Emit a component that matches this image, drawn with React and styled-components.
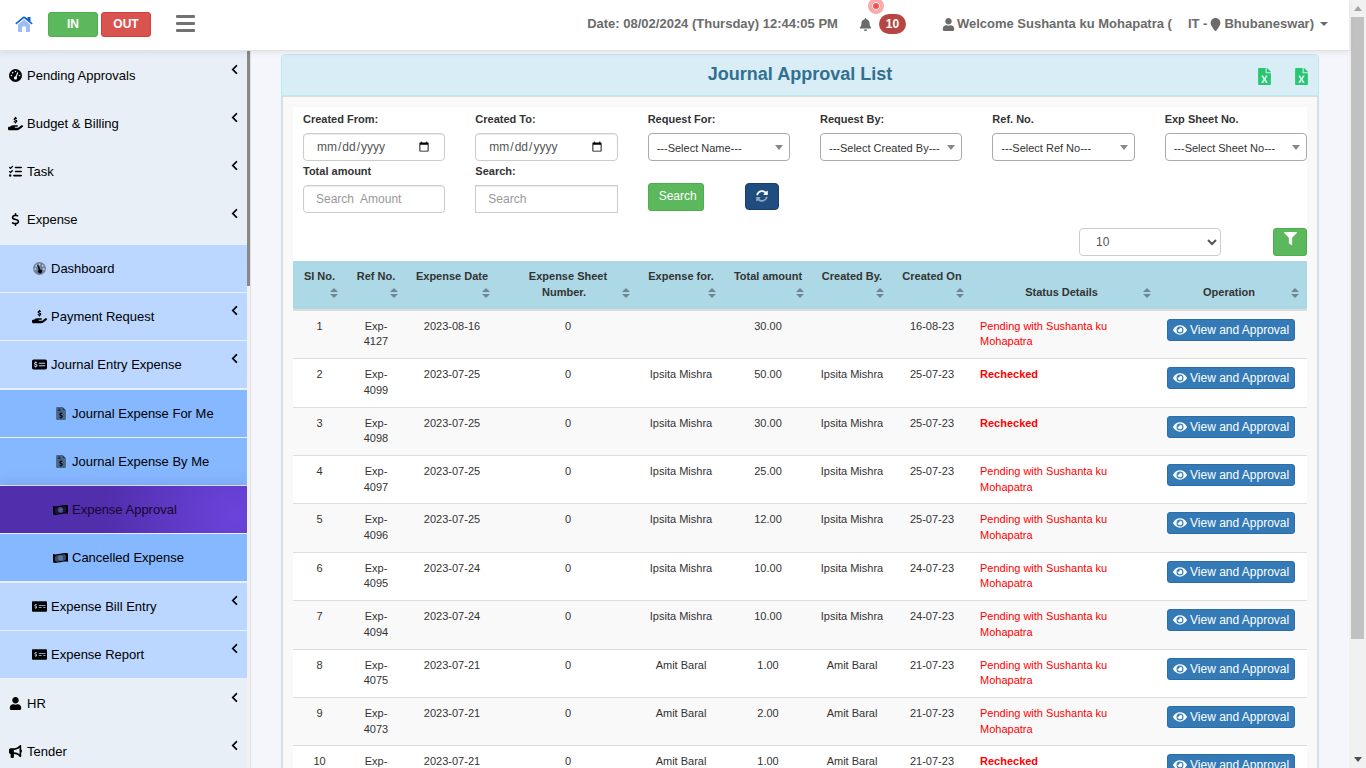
import React, { useState } from 'react'
import styled, { createGlobalStyle, css } from 'styled-components'
import {
  FaBell,
  FaChevronLeft,
  FaEye,
  FaFileExcel,
  FaFilter,
  FaMoneyCheckAlt,
  FaUser,
} from 'react-icons/fa'
import {
  FaBullhorn,
  FaDollarSign,
  FaGaugeHigh,
  FaHandHoldingDollar,
  FaListCheck,
  FaLocationPin,
  FaMoneyCheckDollar,
} from 'react-icons/fa6'

const HomeIcon = () => (
  <svg width="18" height="16" viewBox="0 0 18 16" aria-hidden="true">
    <path d="M3 8.500 9 3.400 15 8.500V15a1 1 0 0 1-1 1h-3v-4.500a1 1 0 0 0-1-1H8a1 1 0 0 0-1 1V16H4a1 1 0 0 1-1-1z" fill="#9fbcf2" />
    <path d="M12.500 1H15.500V5.400L17.700 7.300 16.700 8.500 9 2.300 1.300 8.500.3 7.300 8 .8a1.600 1.600 0 0 1 2 0l2.500 2z" fill="#1263d2" />
  </svg>
)

const GaugeDuo = () => (
  <svg width="13" height="13" viewBox="0 0 16 16" aria-hidden="true">
    <circle cx="8" cy="8" r="8" fill="#000" opacity=".4" />
    <g fill="#bbd7ff">
      <circle cx="8" cy="2.800" r="1.100" />
      <circle cx="4" cy="4.600" r="1.100" />
      <circle cx="2.700" cy="8.600" r="1.100" />
      <circle cx="12" cy="4.600" r="1.100" />
      <circle cx="13.300" cy="8.600" r="1.100" />
    </g>
    <path d="M5.300 3.900 6.500 3.400 9 9.300a2.400 2.400 0 1 1-2 .6z" fill="#000" />
  </svg>
)

const InvoiceDuo = () => (
  <svg width="10" height="13" viewBox="0 0 384 512" aria-hidden="true">
    <path d="M0 40a40 40 0 0 1 40-40h216v128h128v344a40 40 0 0 1-40 40H40a40 40 0 0 1-40-40z" fill="#000" opacity=".45" />
    <path d="M256 0v128h128zM64 64h112v32H64zm0 64h112v32H64z" fill="#000" opacity=".7" />
    <path d="M174 210h36v28c16 2 29 7 40 14l-15 34c-30-17-67-16-67 1 0 34 94 16 94 80 0 31-20 51-52 57v28h-36v-28c-19-2-36-9-48-18l17-34c33 23 77 21 77 0 0-34-94-14-94-79 0-30 19-49 48-55z" fill="#000" />
  </svg>
)

const MoneyDuo = () => (
  <svg width="15" height="12" viewBox="0 0 30 24" aria-hidden="true">
    <path
      d="M0 4c10 3 19-4 30-1v17c-11-3-20 4-30 1zM8 7 4 10v6l3 3c6 0 10-2 15-2l4-3V8l-3-3C18 5 13 7 8 7z"
      fill="#000"
      fillRule="evenodd"
    />
    <path d="M8 7 4 10v6l3 3c6 0 10-2 15-2l4-3V8l-3-3C18 5 13 7 8 7z" fill="#000" opacity=".6" />
    <ellipse cx="15" cy="12" rx="5" ry="5.500" fill="#7fa8e0" opacity=".45" />
  </svg>
)

const RefreshDuo = () => (
  <svg width="12" height="12" viewBox="0 0 512 512" aria-hidden="true">
    <path fill="#fff" d="M370.720 133.280C339.458 104.008 298.888 87.962 255.848 88c-77.458.068-144.328 53.178-162.791 126.850-1.344 5.363-6.122 9.150-11.651 9.150H24.103c-7.498 0-13.194-6.807-11.807-14.176C33.933 94.924 134.813 8 256 8c66.448 0 126.791 26.136 171.315 68.685L463.030 40.970C478.149 25.851 504 36.559 504 57.941V192c0 13.255-10.745 24-24 24H345.941c-21.382 0-32.090-25.851-16.971-40.971z" />
    <path fill="#fff" opacity=".5" d="M32 296h134.059c21.382 0 32.090 25.851 16.971 40.971l-41.750 41.750c31.262 29.273 71.835 45.319 114.876 45.280 77.418-.07 144.315-53.144 162.787-126.849 1.344-5.363 6.122-9.150 11.651-9.150h57.304c7.498 0 13.194 6.807 11.807 14.176C478.067 417.076 377.187 504 256 504c-66.448 0-126.791-26.136-171.315-68.685L48.970 471.030C33.851 486.149 8 475.441 8 454.059V320c0-13.255 10.745-24 24-24z" />
  </svg>
)

const SortIcon = () => (
  <svg width="8" height="10" viewBox="0 0 8 10" aria-hidden="true">
    <path d="M4 0 8 4H0zM0 6h8L4 10z" fill="#6f8791" />
  </svg>
)

const topMenu = [
  { text: 'Pending Approvals', icon: <FaGaugeHigh /> },
  { text: 'Budget & Billing', icon: <FaHandHoldingDollar size={15} /> },
  { text: 'Task', icon: <FaListCheck size={13} /> },
  { text: 'Expense', icon: <FaDollarSign /> },
]

const journalMenu = [
  { text: 'Journal Expense For Me', icon: <InvoiceDuo /> },
  { text: 'Journal Expense By Me', icon: <InvoiceDuo /> },
  { text: 'Expense Approval', icon: <MoneyDuo />, active: true },
  { text: 'Cancelled Expense', icon: <MoneyDuo /> },
]

const columns = [
  { text: 'SI No.', width: 53 },
  { text: 'Ref No.', width: 60 },
  { text: 'Expense Date', width: 92 },
  { text: 'Expense Sheet Number.', width: 140 },
  { text: 'Expense for.', width: 86 },
  { text: 'Total amount', width: 88 },
  { text: 'Created By.', width: 80 },
  { text: 'Created On', width: 80 },
  { text: 'Status Details', width: 187 },
  { text: 'Operation', width: 148 },
]

const pending = 'Pending with Sushanta ku Mohapatra'

const rows = [
  { ref: 'Exp-4127', date: '2023-08-16', name: '', amount: '30.00', on: '16-08-23', status: pending },
  { ref: 'Exp-4099', date: '2023-07-25', name: 'Ipsita Mishra', amount: '50.00', on: '25-07-23', status: 'Rechecked' },
  { ref: 'Exp-4098', date: '2023-07-25', name: 'Ipsita Mishra', amount: '30.00', on: '25-07-23', status: 'Rechecked' },
  { ref: 'Exp-4097', date: '2023-07-25', name: 'Ipsita Mishra', amount: '25.00', on: '25-07-23', status: pending },
  { ref: 'Exp-4096', date: '2023-07-25', name: 'Ipsita Mishra', amount: '12.00', on: '25-07-23', status: pending },
  { ref: 'Exp-4095', date: '2023-07-24', name: 'Ipsita Mishra', amount: '10.00', on: '24-07-23', status: pending },
  { ref: 'Exp-4094', date: '2023-07-24', name: 'Ipsita Mishra', amount: '10.00', on: '24-07-23', status: pending },
  { ref: 'Exp-4075', date: '2023-07-21', name: 'Amit Baral', amount: '1.00', on: '21-07-23', status: pending },
  { ref: 'Exp-4073', date: '2023-07-21', name: 'Amit Baral', amount: '2.00', on: '21-07-23', status: pending },
  { ref: 'Exp-4072', date: '2023-07-21', name: 'Amit Baral', amount: '1.00', on: '21-07-23', status: 'Rechecked' },
]

const MenuItem = ({ item, level, arrow }) => (
  <MenuLink href="#" $level={level} $active={item.active}>
    <MenuIcon>{item.icon}</MenuIcon>
    <span>{item.text}</span>
    {arrow && (
      <Arrow>
        <FaChevronLeft />
      </Arrow>
    )}
  </MenuLink>
)

const SelectField = ({ label, option }) => (
  <Field>
    <Label>{label}</Label>
    <SelectWrap>
      <Select>
        <option>{option}</option>
      </Select>
    </SelectWrap>
  </Field>
)

const App = () => {
  const [amount, setAmount] = useState('')
  const [search, setSearch] = useState('')

  return (
    <Page>
      <GlobalStyle />
      <Shell>
        <Header>
          <HomeLink href="#" aria-label="Home">
            <HomeIcon />
          </HomeLink>
          <InOut>
            <ClockButton $color="#5cb85c" $line="#4cae4c">IN</ClockButton>
            <ClockButton $color="#d9534f" $line="#d43f3a">OUT</ClockButton>
          </InOut>
          <MenuToggle aria-label="Toggle menu">
            <Bar />
            <Bar />
            <Bar />
          </MenuToggle>
          <DateText>Date: 08/02/2024 (Thursday) 12:44:05 PM</DateText>
          <Alerts href="#">
            <FaBell size={13} />
            <Count>10</Count>
            <Pulse />
          </Alerts>
          <UserMenu>
            <FaUser size={13} />
            <UserName>Welcome Sushanta ku Mohapatra (</UserName>
            <span>IT -</span>
            <FaLocationPin size={13} />
            <span>Bhubaneswar)</span>
            <Caret />
          </UserMenu>
        </Header>
        <Body>
          <Sidebar>
            <Nav>
              {topMenu.map((item) => (
                <MenuItem key={item.text} item={item} level={0} arrow />
              ))}
              <SubMenu>
                <MenuItem item={{ text: 'Dashboard', icon: <GaugeDuo /> }} level={1} />
                <MenuItem item={{ text: 'Payment Request', icon: <FaHandHoldingDollar size={15} /> }} level={1} arrow />
                <MenuItem item={{ text: 'Journal Entry Expense', icon: <FaMoneyCheckDollar size={15} /> }} level={1} arrow />
                <SubMenu>
                  {journalMenu.map((item) => (
                    <MenuItem key={item.text} item={item} level={2} />
                  ))}
                </SubMenu>
                <MenuItem item={{ text: 'Expense Bill Entry', icon: <FaMoneyCheckAlt size={15} /> }} level={1} arrow />
                <MenuItem item={{ text: 'Expense Report', icon: <FaMoneyCheckAlt size={15} /> }} level={1} arrow />
              </SubMenu>
              <MenuItem item={{ text: 'HR', icon: <FaUser size={13} /> }} level={0} arrow />
              <MenuItem item={{ text: 'Tender', icon: <FaBullhorn size={13} /> }} level={0} arrow />
            </Nav>
            <SideTrack>
              <SideThumb />
            </SideTrack>
          </Sidebar>
          <Main>
            <Panel>
              <Heading>
                <Title>Journal Approval List</Title>
                <Exports>
                  <ExportButton aria-label="Export list">
                    <FaFileExcel size={17} />
                  </ExportButton>
                  <ExportButton aria-label="Export details">
                    <FaFileExcel size={17} />
                  </ExportButton>
                </Exports>
              </Heading>
              <PanelBody>
                <Sheet>
                  <Filters>
                    <Field>
                      <Label>Created From:</Label>
                      <Input type="date" />
                    </Field>
                    <Field>
                      <Label>Created To:</Label>
                      <Input type="date" />
                    </Field>
                    <SelectField label="Request For:" option="---Select Name---" />
                    <SelectField label="Request By:" option="---Select Created By---" />
                    <SelectField label="Ref. No." option="---Select Ref No---" />
                    <SelectField label="Exp Sheet No." option="---Select Sheet No---" />
                    <Field>
                      <Label>Total amount</Label>
                      <Input
                        placeholder="Search  Amount"
                        value={amount}
                        onChange={(e) => setAmount(e.target.value)}
                      />
                    </Field>
                    <Field>
                      <Label>Search:</Label>
                      <Input
                        $square
                        placeholder="Search"
                        value={search}
                        onChange={(e) => setSearch(e.target.value)}
                      />
                    </Field>
                    <Actions>
                      <SearchButton>Search</SearchButton>
                      <RefreshButton aria-label="Refresh">
                        <RefreshDuo />
                      </RefreshButton>
                    </Actions>
                  </Filters>
                  <TableTools>
                    <PageSize aria-label="Rows per page">
                      <option>10</option>
                      <option>25</option>
                    </PageSize>
                    <FilterButton aria-label="Filter">
                      <FaFilter size={13} />
                    </FilterButton>
                  </TableTools>
                  <Table>
                    <colgroup>
                      {columns.map((col) => (
                        <col key={col.text} width={col.width} />
                      ))}
                    </colgroup>
                    <thead>
                      <tr>
                        {columns.map((col) => (
                          <Th key={col.text}>
                            {col.text}
                            <Sort>
                              <SortIcon />
                            </Sort>
                          </Th>
                        ))}
                      </tr>
                    </thead>
                    <tbody>
                      {rows.map((row, i) => (
                        <Row key={row.ref}>
                          <Td>{i + 1}</Td>
                          <Td>{row.ref}</Td>
                          <Td>{row.date}</Td>
                          <Td>0</Td>
                          <Td>{row.name}</Td>
                          <Td>{row.amount}</Td>
                          <Td>{row.name}</Td>
                          <Td>{row.on}</Td>
                          <StatusTd $strong={row.status === 'Rechecked'}>{row.status}</StatusTd>
                          <ActionTd>
                            <ViewButton>
                              <FaEye size={14} />
                              View and Approval
                            </ViewButton>
                          </ActionTd>
                        </Row>
                      ))}
                    </tbody>
                  </Table>
                </Sheet>
              </PanelBody>
            </Panel>
          </Main>
        </Body>
      </Shell>
      <PageTrack>
        <TrackArrow $up />
        <PageThumb />
        <TrackArrow />
      </PageTrack>
    </Page>
  )
}

export default App

const GlobalStyle = createGlobalStyle`
* {
  box-sizing: border-box;
}
body {
  margin: 0;
  overflow: hidden;
  color: #333;
  font-family: "Liberation Sans", Arial, sans-serif;
  font-size: 11px;
  line-height: 1.42857143;
}
button, input, select {
  font-family: inherit;
}
button {
  cursor: pointer;
}
a {
  text-decoration: none;
}
`

const Page = styled.div`
display: flex;
height: 100vh;
overflow: hidden;
`

const Shell = styled.div`
flex: 1;
min-width: 0;
display: flex;
flex-direction: column;
`

const Header = styled.header`
position: relative;
z-index: 1;
flex: none;
display: flex;
align-items: center;
height: 51px;
padding: 0 21px 2px 15px;
background: #fff;
border-bottom: 1px solid #e2e2e4;
box-shadow: 0 2px 6px rgba(0, 0, 0, 0.07);
color: #6b6b6b;
font-size: 13px;
font-weight: bold;
line-height: 20px;
white-space: nowrap;
`

const HomeLink = styled.a`
display: flex;
margin-right: 15px;
`

const InOut = styled.div`
display: flex;
gap: 3px;
`

const ClockButton = styled.button`
width: 50px;
height: 25px;
padding: 0;
border: 1px solid ${(p) => p.$line};
border-radius: 3px;
background: ${(p) => p.$color};
color: #fff;
font-size: 12px;
font-weight: bold;
`

const MenuToggle = styled.button`
display: flex;
flex-direction: column;
gap: 4px;
margin: 0 auto 0 25px;
padding: 0 0 2px;
border: 0;
background: none;
`

const Bar = styled.span`
width: 19px;
height: 3px;
border-radius: 1px;
background: #727272;
`

const DateText = styled.div`
margin-right: 21px;
`

const Alerts = styled.a`
position: relative;
display: flex;
align-items: center;
gap: 7px;
margin-right: 36px;
color: inherit;
`

const Count = styled.span`
width: 27px;
height: 20px;
border-radius: 10px;
background: #b54643;
color: #fff;
font-size: 12px;
line-height: 20px;
text-align: center;
`

const Pulse = styled.span`
position: absolute;
top: -16px;
left: 9px;
width: 16px;
height: 16px;
border: 4px solid #faa9ac;
border-radius: 50%;
background: #ef5350;
box-shadow: inset 0 0 0 1px #fff;
`

const UserMenu = styled.button`
display: flex;
align-items: center;
gap: 2px;
padding: 0;
border: 0;
background: none;
color: inherit;
font-size: 13px;
font-weight: bold;
line-height: 20px;
`

const UserName = styled.span`
margin-right: 14px;
`

const Caret = styled.span`
margin-left: 4px;
border: 4px solid transparent;
border-top-color: currentColor;
border-bottom: 0;
`

const Body = styled.div`
flex: 1;
min-height: 0;
display: flex;
`

const Sidebar = styled.aside`
flex: none;
display: flex;
width: 251px;
overflow: hidden;
border-right: 1px solid #e0e0e0;
`

const Nav = styled.nav`
flex: 1;
padding-top: 1px;
background: #e8eff7;
`

const SubMenu = styled.div`
padding: 1px 0;
background: #e8eff7;
`

const levelStyles = [
  css`
    padding-left: 8px;
  `,
  css`
    padding-left: 32px;
    background: #bbd7ff;
  `,
  css`
    padding-left: 53px;
    background: #86b8ff;
  `,
]

const MenuLink = styled.a`
display: flex;
align-items: center;
gap: 4px;
height: 48px;
padding-right: 7px;
border-bottom: 1px solid #e8eff7;
color: #000;
font-size: 13px;
line-height: 21px;
${(p) => levelStyles[p.$level]}
${(p) =>
  p.$active &&
  css`
    background: radial-gradient(circle at 95% 60%, #6b43dc 0, #512eac 55%);
    box-shadow: 0 -4px 12px rgba(81, 46, 172, 0.15);
    color: #14082e;
  `}
`

const MenuIcon = styled.span`
flex: none;
display: flex;
justify-content: center;
width: 15px;
`

const Arrow = styled.span`
display: flex;
margin: 0 0 12px auto;
font-size: 11px;
`

const SideTrack = styled.div`
width: 3px;
background: #f1f1f1;
`

const SideThumb = styled.div`
height: 235px;
background: #888;
`

const Main = styled.main`
flex: 1;
min-width: 0;
overflow: hidden;
padding: 3px 30px;
background: #f4f6fb;
`

const Panel = styled.section`
border: 1px solid #bce8f1;
border-radius: 4px;
background: #f9f9f9;
`

const Heading = styled.div`
display: grid;
grid-template-columns: 1fr auto 1fr;
height: 41px;
padding: 0 8px;
border-bottom: 1px solid #bce8f1;
border-radius: 3px 3px 0 0;
background: #d9edf7;
`

const Title = styled.h1`
grid-column: 2;
margin: 0;
color: #31708f;
font-size: 18px;
line-height: 38px;
`

const Exports = styled.div`
display: flex;
align-items: center;
justify-content: flex-end;
gap: 20px;
padding-top: 3px;
`

const ExportButton = styled.button`
display: flex;
padding: 0;
border: 0;
background: none;
color: #28c76f;
`

const PanelBody = styled.div`
padding: 10px;
border: 1px solid #ddd;
`

const Sheet = styled.div`
padding-top: 4px;
background: #fff;
`

const Filters = styled.form`
display: grid;
grid-template-columns: repeat(6, 1fr);
gap: 2px 30px;
padding-left: 10px;
`

const Field = styled.label`
display: block;
min-width: 0;
`

const Label = styled.span`
display: block;
height: 16px;
margin-bottom: 6px;
font-weight: bold;
line-height: 16px;
`

const Input = styled.input`
display: block;
width: 100%;
height: 28px;
padding: 0 12px;
border: 1px solid #ccc;
border-radius: ${(p) => (p.$square ? '0' : '4px')};
background: #fff;
box-shadow: inset 0 1px 1px rgba(0, 0, 0, 0.08);
color: #555;
font-size: 12px;
&::placeholder {
  color: #999;
}
`

const SelectWrap = styled.span`
position: relative;
display: block;
&::after {
  content: "";
  position: absolute;
  top: 12px;
  right: 7px;
  border: 4px solid transparent;
  border-top: 5px solid #888;
  border-bottom: 0;
  pointer-events: none;
}
`

const Select = styled.select`
display: block;
appearance: none;
width: 100%;
height: 28px;
padding: 2px 20px 0 8px;
border: 1px solid #aaa;
border-radius: 4px;
background: #fff;
color: #333;
font-size: 11px;
`

const Actions = styled.div`
display: flex;
gap: 41px;
padding-top: 20px;
`

const SearchButton = styled.button`
width: 56px;
height: 28px;
padding: 0 0 2px 4px;
border: 1px solid #4cae4c;
border-radius: 3px;
background: #5cb85c;
color: #fff;
font-size: 12px;
`

const RefreshButton = styled.button`
display: flex;
align-items: center;
justify-content: center;
width: 34px;
height: 27px;
padding: 0 0 2px;
border: 1px solid #1a3d66;
border-radius: 4px;
background: #204d80;
`

const TableTools = styled.div`
display: flex;
justify-content: flex-end;
gap: 52px;
padding: 15px 0 5px;
`

const PageSize = styled.select`
width: 142px;
height: 28px;
padding: 0 0 0 12px;
border: 1px solid #ccc;
border-radius: 4px;
background: #fff;
color: #555;
font-size: 12px;
`

const FilterButton = styled.button`
display: flex;
align-items: flex-start;
justify-content: center;
width: 34px;
height: 28px;
padding: 3px 0 0;
border: 1px solid #4cae4c;
border-radius: 3px;
background: #5cb85c;
color: #fff;
`

const Table = styled.table`
width: 100%;
table-layout: fixed;
border-collapse: separate;
border-spacing: 0;
`

const Th = styled.th`
padding: 8px;
border-bottom: 2px solid #ddd;
background: #add8e6;
text-align: center;
vertical-align: bottom;
`

const Sort = styled.span`
float: right;
display: flex;
align-items: center;
height: 16px;
`

const Row = styled.tr`
&:nth-child(odd) {
  background: #f9f9f9;
}
`

const Td = styled.td`
padding: 8px;
border-bottom: 1px solid #ddd;
text-align: center;
vertical-align: top;
`

const StatusTd = styled(Td)`
color: #f00;
font-weight: ${(p) => (p.$strong ? 'bold' : 'normal')};
text-align: left;
`

const ActionTd = styled(Td)`
padding-bottom: 0;
`

const ViewButton = styled.button`
display: flex;
align-items: center;
gap: 3px;
height: 22px;
padding: 0 5px;
border: 1px solid #2e6da4;
border-radius: 3px;
background: #337ab7;
color: #fff;
font-size: 12px;
white-space: nowrap;
`

const PageTrack = styled.div`
flex: none;
display: flex;
flex-direction: column;
align-items: center;
justify-content: space-between;
width: 17px;
background: #f1f1f1;
`

const PageThumb = styled.div`
width: 13px;
height: 81%;
margin-bottom: auto;
background: #c1c1c1;
`

const TrackArrow = styled.span`
margin: 6px 0;
border: 4px solid transparent;
${(p) =>
  p.$up
    ? css`
        border-top: 0;
        border-bottom: 5px solid #a3a3a3;
      `
    : css`
        border-top: 5px solid #505050;
        border-bottom: 0;
      `}
`
